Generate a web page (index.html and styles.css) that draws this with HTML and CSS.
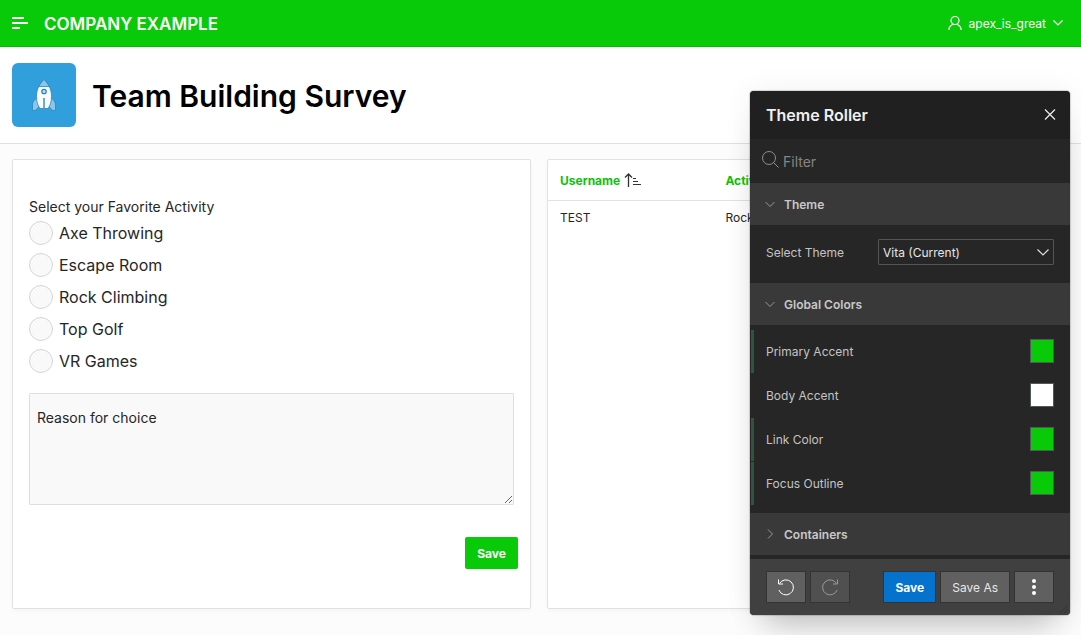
FILE: index.html
```html
<!DOCTYPE html>
<html lang="en">
<head>
    <meta charset="UTF-8">
    <meta name="viewport" content="width=device-width, initial-scale=1.0">
    <title>Team Building Survey</title>
    <link rel="stylesheet" href="styles.css">
</head>
<body>
    <header class="header">
        <button class="nav-toggle" type="button" aria-label="Main Navigation">
            <svg width="16" height="12" viewBox="0 0 16 12" fill="#fff"><path d="M0 0h12v2H0zM0 5h16v2H0zM0 10h8v2H0z"/></svg>
        </button>
        <a class="logo" href="#">COMPANY EXAMPLE</a>
        <button class="user-menu" type="button">
            <svg width="14" height="16" viewBox="0 0 14 16" fill="none" stroke="#fff" stroke-width="1.200"><circle cx="7" cy="5.5" r="4"/><path d="M1 15v-1c0-2 1.600-3.300 4-4.700M13 15v-1c0-2-1.600-3.300-4-4.700"/></svg>
            <span>apex_is_great</span>
            <svg width="10" height="6" viewBox="0 0 10 6" fill="none" stroke="#fff" stroke-width="1.200"><path d="M.5.5 5 5 9.500.5"/></svg>
        </button>
    </header>

    <div class="title-bar">
        <div class="app-icon">
            <svg width="24" height="32" viewBox="0 0 24 32">
                <path d="M5.500 18.500C2 21 .5 23 .5 26v5.500H2c2-.2 3.500-1.500 5.500-5zM18.500 18.500C22 21 23.500 23 23.500 26v5.500H22c-2-.2-3.500-1.500-5.500-5z" fill="#8cc6ea" stroke="#2a86be" stroke-width=".8"/>
                <path d="M12 .5C7.500 5 4.500 10 4.500 17.500c0 5 1.200 9 3.500 12h8c2.300-3 3.500-7 3.500-12 0-7.500-3-12.500-7.500-17z" fill="#f9fcfe" stroke="#2a86be" stroke-width=".8"/>
                <path d="M12 .5C9.800 2.700 8 5 6.700 7.500h10.600C16 5 14.200 2.700 12 .5z" fill="#8cc6ea" stroke="#2a86be" stroke-width=".8"/>
                <circle cx="12" cy="12.500" r="2.200" fill="#c5e2f5" stroke="#2a86be" stroke-width="1.300"/>
                <path d="M11.200 19h1.600v11h-1.600z" fill="#4796c6"/>
            </svg>
        </div>
        <h1>Team Building Survey</h1>
    </div>

    <main class="content">
        <form class="region survey">
            <fieldset class="activities">
                <legend>Select your Favorite Activity</legend>
                <label class="option"><input type="radio" name="activity" value="axe">Axe Throwing</label>
                <label class="option"><input type="radio" name="activity" value="escape">Escape Room</label>
                <label class="option"><input type="radio" name="activity" value="rock">Rock Climbing</label>
                <label class="option"><input type="radio" name="activity" value="golf">Top Golf</label>
                <label class="option"><input type="radio" name="activity" value="vr">VR Games</label>
            </fieldset>
            <div class="reason">
                <label for="reason">Reason for choice</label>
                <textarea id="reason"></textarea>
            </div>
            <button class="save" type="button">Save</button>
        </form>

        <section class="region">
            <table class="report">
                <thead>
                    <tr>
                        <th class="col-user"><a href="#">Username</a>
                            <svg width="18" height="14" viewBox="0 0 18 14" fill="none" stroke="#333"><path d="M5.500 14V1M2 4.500 5.500 1 9 4.500" stroke-width="1.300"/><path d="M10 5.500h3M10 8.500h5M10 11.500h8"/></svg>
                        </th>
                        <th><a href="#">Activity</a></th>
                    </tr>
                </thead>
                <tbody>
                    <tr>
                        <td>TEST</td>
                        <td>Rock Climbing</td>
                    </tr>
                </tbody>
            </table>
        </section>
    </main>

    <!-- Theme Roller dialog -->
    <aside class="roller">
        <div class="roller-title">
            <h2>Theme Roller</h2>
            <button class="close" type="button" aria-label="Close">
                <svg width="12" height="12" viewBox="0 0 12 12" fill="none" stroke="#eee" stroke-width="1.200"><path d="M1 .5l10 10M11 .5l-10 10"/></svg>
            </button>
        </div>
        <div class="filter">
            <svg width="17" height="17" viewBox="0 0 17 17" fill="none" stroke="#8e8e8e"><circle cx="7" cy="7" r="6.500"/><path d="M11.500 11.500l5 5"/></svg>
            <input type="text" placeholder="Filter" aria-label="Filter">
        </div>

        <button class="group" type="button">
            <svg width="10" height="10" viewBox="0 0 10 10" fill="none" stroke="#999"><path d="M.5 3 5 7.500 9.500 3"/></svg>
            Theme
        </button>
        <div class="theme-row">
            <label for="theme">Select Theme</label>
            <div class="select-wrap">
                <select id="theme"><option>Vita (Current)</option></select>
                <svg width="12" height="7" viewBox="0 0 12 7" fill="none" stroke="#ddd" stroke-width="1.200"><path d="M.5.5 6 6 11.500.5"/></svg>
            </div>
        </div>

        <button class="group" type="button">
            <svg width="10" height="10" viewBox="0 0 10 10" fill="none" stroke="#999"><path d="M.5 3 5 7.500 9.500 3"/></svg>
            Global Colors
        </button>
        <div class="colors">
            <div class="color changed"><label for="primary">Primary Accent</label><input type="color" id="primary" value="#08ca08"></div>
            <div class="color"><label for="body-accent">Body Accent</label><input type="color" id="body-accent" value="#ffffff"></div>
            <div class="color changed"><label for="link">Link Color</label><input type="color" id="link" value="#08ca08"></div>
            <div class="color changed"><label for="focus">Focus Outline</label><input type="color" id="focus" value="#08ca08"></div>
        </div>

        <button class="group" type="button">
            <svg width="10" height="10" viewBox="0 0 10 10" fill="none" stroke="#999"><path d="M3 .5 7.500 5 3 9.500"/></svg>
            Containers
        </button>

        <div class="roller-footer">
            <button class="btn icon-btn" type="button" aria-label="Undo">
                <svg width="16" height="17" viewBox="0 0 16 17" fill="none" stroke="#fff"><path d="M.9 11A7.500 7.500 0 1 0 1.500 4.500M.5.5v4.500H5"/></svg>
            </button>
            <button class="btn icon-btn" type="button" aria-label="Redo" disabled>
                <svg width="16" height="17" viewBox="0 0 16 17" fill="none" stroke="#999"><path d="M15.100 11A7.500 7.500 0 1 1 14.500 4.500M15.500.5v4.500H11"/></svg>
            </button>
            <button class="btn primary" type="button">Save</button>
            <button class="btn" type="button">Save As</button>
            <button class="btn icon-btn" type="button" aria-label="More">
                <svg width="4" height="16" viewBox="0 0 4 16" fill="#fff"><circle cx="2" cy="2" r="2"/><circle cx="2" cy="8" r="2"/><circle cx="2" cy="14" r="2"/></svg>
            </button>
            <svg class="grip" width="8" height="8" viewBox="0 0 8 8" fill="none" stroke="#333"><path d="M0 8 8 0M4 8l4-4"/></svg>
        </div>
    </aside>
</body>
</html>
```

FILE: styles.css
```css
* {
    box-sizing: border-box;
}

body {
    margin: 0;
    background: #fcfcfc;
    color: #262626;
    font-family: Inter, "Liberation Sans", sans-serif;
    font-size: 14px;
    line-height: 20px;
}

button,
input,
select,
textarea {
    font-family: inherit;
}

button {
    padding: 0;
    border: 0;
    background: none;
}

svg {
    display: block;
    flex: none;
}

a {
    color: inherit;
    text-decoration: none;
}

/* Header */
.header {
    display: flex;
    align-items: center;
    height: 47px;
    padding: 0 18px 0 12px;
    background: #08ca08;
    border-bottom: 1px solid #07b607;
    color: #fff;
}

.logo {
    margin-left: 16px;
    padding-top: 2px;
    font-size: 17px;
    font-weight: 600;
    line-height: 24px;
}

.user-menu {
    display: flex;
    align-items: center;
    gap: 7px;
    margin-left: auto;
    color: #fff;
    font-size: 12px;
}

.title-bar {
    display: flex;
    align-items: center;
    gap: 16px;
    padding: 16px 12px;
    background: #fff;
    border-bottom: 1px solid #e0e0e0;
}

.app-icon {
    display: flex;
    align-items: center;
    justify-content: center;
    width: 64px;
    height: 64px;
    border-radius: 6px;
    background: #309fdb;
}

h1 {
    margin: 0;
    padding-top: 2px;
    color: #000;
    font-size: 30px;
    font-weight: 600;
    line-height: 40px;
}

/* Page regions */
.content {
    display: grid;
    grid-template-columns: 1fr 1fr;
    gap: 16px;
    padding: 15px 15px 16px 12px;
}

.region {
    min-height: 450px;
    background: #fff;
    border: 1px solid #e2e2e2;
    border-radius: 2px;
    box-shadow: 0 2px 4px rgba(0, 0, 0, 0.03);
}

.survey {
    display: flex;
    flex-direction: column;
    padding: 37px 12px 39px 16px;
}

.activities {
    margin: 0;
    padding: 0;
    border: 0;
}

.activities legend {
    padding: 0;
}

.option {
    display: flex;
    align-items: center;
    gap: 6px;
    height: 32px;
    font-size: 16px;
}

.option input {
    appearance: none;
    width: 24px;
    height: 24px;
    margin: 0;
    border: 1px solid #d5d5d5;
    border-radius: 50%;
    background: #f9f9f9;
}

.option input:checked {
    border: 8px solid #08ca08;
}

.reason {
    position: relative;
    margin: 16px 4px 0 0;
}

.reason label {
    position: absolute;
    top: 15px;
    left: 8px;
}

.reason textarea {
    display: block;
    width: 100%;
    height: 112px;
    padding: 36px 8px 8px;
    border: 1px solid #dfdfdf;
    border-radius: 1px;
    background: #f9f9f9;
    font-size: 14px;
}

.save {
    align-self: flex-end;
    height: 32px;
    margin-top: 32px;
    padding: 0 12px;
    border-radius: 2px;
    background: #08ca08;
    color: #fff;
    font-size: 12px;
    font-weight: 700;
}

.report {
    width: 100%;
    border-collapse: separate;
    border-spacing: 0;
    font-size: 12px;
    line-height: 16px;
    text-align: left;
}

.report th {
    height: 41px;
    padding: 2px 12px 0;
    border-bottom: 1px solid #e2e2e2;
    color: #08c408;
    font-weight: 700;
}

.report td {
    padding: 9px 12px 8px;
}

.report svg {
    display: inline-block;
    vertical-align: -2px;
}

.col-user {
    width: 32%;
}

/* Theme Roller */
.roller {
    position: absolute;
    top: 91px;
    right: 11px;
    width: 320px;
    border-radius: 4px;
    overflow: hidden;
    background: #262626;
    box-shadow: 0 24px 32px -16px rgba(0, 0, 0, 0.25), 0 0 32px rgba(0, 0, 0, 0.06), 0 0 1px 1px rgba(0, 0, 0, 0.15);
    color: #c4c4c4;
    font-size: 12px;
}

.roller-title {
    display: flex;
    align-items: center;
    justify-content: space-between;
    height: 48px;
    padding: 0 14px 0 16px;
    background: #202020;
}

.roller-title h2 {
    margin: 0;
    color: #f0f0f0;
    font-size: 16px;
    font-weight: 600;
}

.filter {
    display: flex;
    align-items: center;
    gap: 4px;
    height: 44px;
    padding: 0 12px 4px;
}

.filter input {
    flex: 1;
    min-width: 0;
    padding: 4px 0 0;
    border: 0;
    background: none;
    color: #ddd;
    font-size: 14px;
}

.filter input::placeholder {
    color: #858585;
}

.group {
    display: flex;
    align-items: center;
    gap: 9px;
    width: 100%;
    height: 42px;
    padding: 0 15px;
    background: #393939;
    color: #c8c8c8;
    font-size: 12px;
    font-weight: 600;
}

.theme-row {
    display: flex;
    align-items: center;
    justify-content: space-between;
    padding: 14px 16px 18px;
}

.theme-row label,
.color label {
    padding-top: 2px;
}

.select-wrap {
    position: relative;
    width: 176px;
}

.select-wrap select {
    appearance: none;
    display: block;
    width: 100%;
    height: 26px;
    padding: 0 24px 0 4px;
    border: 1px solid #555;
    border-radius: 1px;
    background: #262626;
    color: #e6e6e6;
    font-size: 12px;
}

.select-wrap svg {
    position: absolute;
    top: 10px;
    right: 5px;
    pointer-events: none;
}

.colors {
    padding: 4px 0 8px 1px;
}

.color {
    display: flex;
    align-items: center;
    justify-content: space-between;
    height: 44px;
    padding: 0 16px 0 15px;
}

.color.changed {
    background: linear-gradient(#2f5440, #2f5440) left bottom / 3px 43px no-repeat;
}

.color input {
    appearance: none;
    width: 24px;
    height: 24px;
    padding: 0;
    border: 1px solid #505a58;
    background: none;
}

.color input::-webkit-color-swatch-wrapper {
    padding: 0;
}

.color input::-webkit-color-swatch {
    border: 0;
}

.roller-footer {
    position: relative;
    display: flex;
    align-items: center;
    gap: 4px;
    margin-top: 4px;
    padding: 12px 16px;
    background: #404040;
}

.btn {
    height: 32px;
    padding: 0 11px;
    border: 1px solid #333;
    background: #606060;
    color: #e8e8e8;
    font-size: 12px;
}

.btn.primary {
    margin-left: auto;
    background: #0572ce;
    color: #fff;
    font-weight: 700;
}

.icon-btn {
    display: flex;
    align-items: center;
    justify-content: center;
    width: 40px;
    padding: 0;
}

.btn:disabled {
    background: #505050;
}

.grip {
    position: absolute;
    right: 2px;
    bottom: 2px;
}
```
